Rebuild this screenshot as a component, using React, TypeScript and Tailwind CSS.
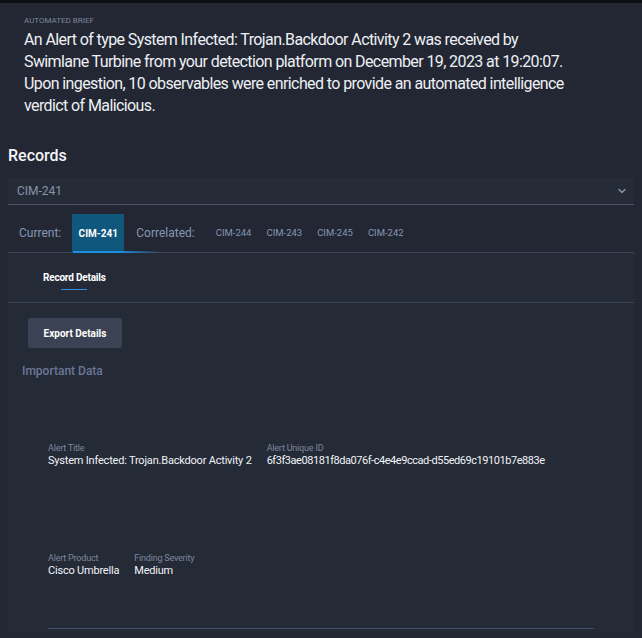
import { ChevronDown } from 'lucide-react'

const correlated = ['CIM-244', 'CIM-243', 'CIM-245', 'CIM-242']

function Field({ label, value, tight }: { label: string; value: string; tight?: boolean }) {
  return (
    <div className="flex flex-col">
      <span className="text-[9px] leading-[12px] tracking-[-0.2px] text-[#7d879c]">{label}</span>
      <span
        className={
          tight
            ? 'text-[11px] leading-[14px] tracking-[-0.45px] text-[#f1f3f7]'
            : 'text-[11px] leading-[14px] tracking-[-0.2px] text-[#f1f3f7]'
        }
      >
        {value}
      </span>
    </div>
  )
}

export default function App() {
  return (
    <div
      className="h-[638px] w-[642px] overflow-hidden border-t-[3px] border-[#0d0f13] bg-[#222733] text-white"
      style={{ fontFamily: 'Roboto, "Noto Sans", sans-serif' }}
    >
      <section className="pl-6 pr-[60px] pt-[13px]">
        <p className="text-[8px] uppercase leading-[10px] text-[#7f889c]">Automated brief</p>
        <p className="mt-[3px] text-[16px] leading-[22px] tracking-[-0.6px] text-[#eef0f4]">
          An Alert of type System Infected: Trojan.Backdoor Activity 2 was received by Swimlane
          Turbine from your detection platform on December 19, 2023 at 19:20:07. Upon ingestion,
          10 observables were enriched to provide an automated intelligence verdict of Malicious.
        </p>
      </section>

      <section className="mx-2 mt-[29px]">
        <h2 className="text-[16px] font-medium leading-[20px] text-[#f4f5f8]">Records</h2>

        <div className="mt-[12px] flex h-[27px] items-center justify-between border-b border-[#4a5265] bg-[#262b38] pl-[9px] pr-[6px]">
          <span className="text-[12px] text-[#8a93a6]">CIM-241</span>
          <ChevronDown className="h-3 w-3 text-[#8a93a6]" strokeWidth={3} />
        </div>

        <div className="relative mt-[9px] flex h-[39px] items-stretch border-b border-[#3d4456]">
          <span className="flex items-center pl-[11px] pr-[11px] text-[12px] text-[#8596b4]">Current:</span>
          <span className="flex w-[52px] items-center justify-center bg-[#10577e] text-[10px] font-bold text-white">
            CIM-241
          </span>
          <span className="flex items-center pl-[12px] pr-[21px] text-[12px] text-[#8596b4]">Correlated:</span>
          {correlated.map((c) => (
            <span key={c} className="flex items-center pr-[15px] text-[9.5px] text-[#8596b4]">
              {c}
            </span>
          ))}
          <span className="absolute bottom-[-1px] left-[65px] h-[2px] w-[90px] bg-gradient-to-r from-[#1e8fe0] via-[#1e8fe0] to-transparent" />
        </div>

        <div className="h-[380px] bg-[#252a37]">
          <div className="flex h-[50px] items-start border-b border-[#3d4456] pl-[35px] pt-[19px]">
            <div className="flex flex-col items-center">
              <span className="text-[10px] font-bold leading-[12px] tracking-[-0.2px] text-white">Record Details</span>
              <span className="mt-[5px] h-px w-[26px] bg-[#2f8fe0]" />
            </div>
          </div>

          <div className="px-5 pt-[15px]">
            <button className="flex h-[30px] w-[94px] items-center justify-center rounded-[2px] bg-[#3a4253] text-[10px] font-bold text-white">
              Export Details
            </button>
            <p className="ml-[-6px] mt-[14px] text-[12px] font-medium text-[#6a7898]">Important Data</p>

            <div className="ml-5 mt-[62px] flex gap-[15px]">
              <Field label="Alert Title" value="System Infected: Trojan.Backdoor Activity 2" />
              <Field label="Alert Unique ID" value="6f3f3ae08181f8da076f-c4e4e9ccad-d55ed69c19101b7e883e" tight />
            </div>

            <div className="ml-5 mt-[84px] flex gap-[15px]">
              <Field label="Alert Product" value="Cisco Umbrella" />
              <Field label="Finding Severity" value="Medium" />
            </div>

            <div className="ml-5 mr-[20px] mt-[50px] h-px bg-[#454d66]" />
          </div>
        </div>
      </section>
    </div>
  )
}
